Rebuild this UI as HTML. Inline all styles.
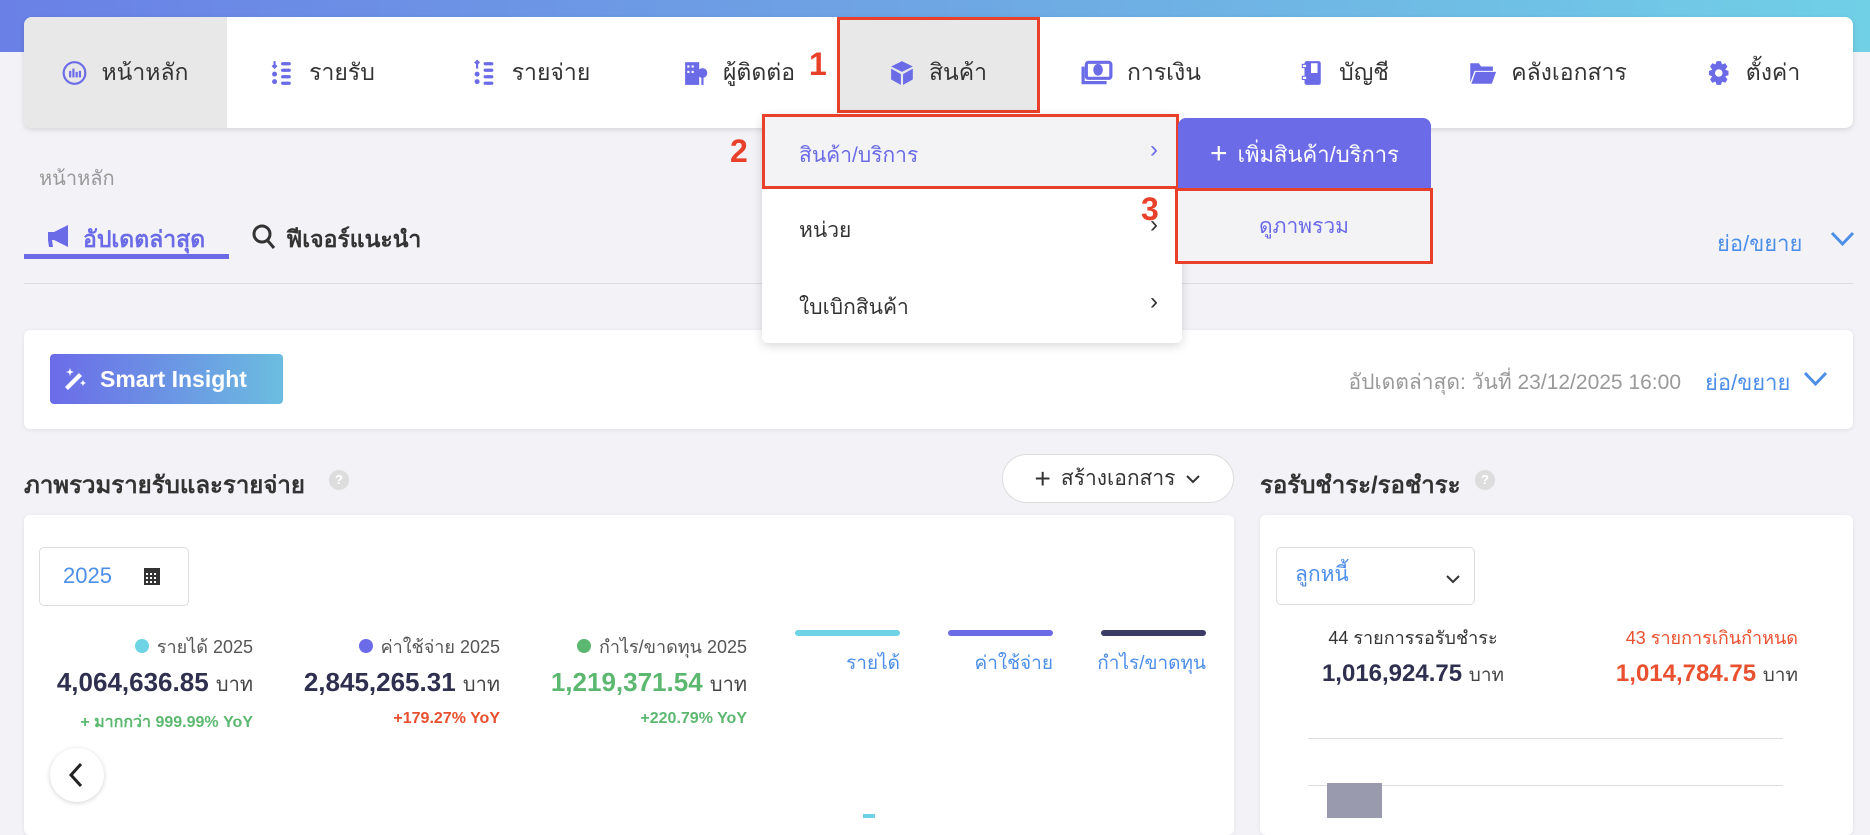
<!DOCTYPE html>
<html><head><meta charset="utf-8">
<style>
*{box-sizing:border-box;margin:0;padding:0}
body{width:1870px;height:818px;overflow:hidden;background:#f3f3f7;font-family:"Liberation Sans","Noto Sans CJK SC",sans-serif;color:#333;position:relative}
.a{position:absolute;white-space:nowrap}
.top{position:absolute;left:0;top:0;width:1870px;height:52px;background:linear-gradient(90deg,#6a80e6,#6ea6e4 50%,#70d0e6)}
.nav{position:absolute;left:24px;top:17px;width:1829px;height:111px;background:#fff;border-radius:8px;box-shadow:0 2px 6px rgba(0,0,0,.12);overflow:hidden}
.ni{position:absolute;top:0;height:111px;display:flex;align-items:center;justify-content:center;font-size:23px;color:#333;gap:14px;transform:translateX(-50%)}
.ni svg{flex-shrink:0;width:26px;height:28px}
.red{border:3px solid #e8402a}
.rn{position:absolute;color:#e8402a;font-weight:bold;font-size:32px}
.card{position:absolute;background:#fff;border-radius:6px;box-shadow:0 1px 4px rgba(0,0,0,.08)}
.blue{color:#4d8fe8}
</style></head><body>
<div class="top"></div>
<div class="nav">
 <div style="position:absolute;left:0;top:0;width:203px;height:111px;background:#e8e8e8"></div>
 <div class="ni" style="left:101px"><svg viewBox="0 0 24 24" fill="none" stroke="#6b6be8" stroke-width="2"><circle cx="12" cy="12" r="10"/><path d="M8 10v6M11 8v8M14 11v5M17 10v6"/></svg>หน้าหลัก</div>
 <div class="ni" style="left:298px"><svg viewBox="0 0 24 24" fill="#6b6be8"><path d="M5 1v6M3 5l2 2 2-2" stroke="#6b6be8" stroke-width="2" fill="none"/><circle cx="5" cy="13" r="2.3"/><circle cx="5" cy="20" r="2.3"/><rect x="11" y="2" width="9" height="3" rx="1.5"/><rect x="11" y="8" width="9" height="3" rx="1.5"/><rect x="11" y="14" width="9" height="3" rx="1.5"/><rect x="11" y="20" width="9" height="3" rx="1.5"/></svg>รายรับ</div>
 <div class="ni" style="left:507px"><svg viewBox="0 0 24 24" fill="#6b6be8"><path d="M5 8V1M3 3l2-2 2 2" stroke="#6b6be8" stroke-width="2" fill="none"/><circle cx="5" cy="13" r="2.3"/><circle cx="5" cy="20" r="2.3"/><rect x="11" y="2" width="9" height="3" rx="1.5"/><rect x="11" y="8" width="9" height="3" rx="1.5"/><rect x="11" y="14" width="9" height="3" rx="1.5"/><rect x="11" y="20" width="9" height="3" rx="1.5"/></svg>รายจ่าย</div>
 <div class="ni" style="left:715px"><svg viewBox="0 0 24 24" fill="#6b6be8"><rect x="2" y="2" width="13" height="21"/><g fill="#fff"><rect x="4" y="5" width="2" height="2"/><rect x="8" y="5" width="2" height="2"/><rect x="4" y="10" width="2" height="2"/><rect x="8" y="10" width="2" height="2"/></g><circle cx="18" cy="12" r="4.5"/><rect x="17" y="16" width="2" height="7"/></svg>ผู้ติดต่อ</div>
 <div style="position:absolute;left:813px;top:0;width:203px;height:96px;background:#e8e8e8" class="red"></div>
 <div class="ni" style="left:914px"><svg viewBox="0 0 24 24" fill="#6b6be8"><path d="M12 1l10 5-10 5L2 6z"/><path d="M2 8l9 5v10l-9-5zM22 8l-9 5v10l9-5z"/></svg>สินค้า</div>
 <div class="ni" style="left:1117px"><svg style="width:32px" viewBox="0 0 30 24" fill="none" stroke="#6b6be8" stroke-width="3"><rect x="5" y="2" width="23" height="15" rx="2"/><path d="M2 6v15h22"/><ellipse cx="16" cy="9" rx="3" ry="4" fill="#6b6be8"/></svg>การเงิน</div>
 <div class="ni" style="left:1320px"><svg viewBox="0 0 24 24" fill="#6b6be8"><rect x="5" y="1" width="15" height="22" rx="2"/><rect x="3" y="4" width="4" height="3" fill="#fff" stroke="#6b6be8"/><rect x="3" y="15" width="4" height="3" fill="#fff" stroke="#6b6be8"/><rect x="11" y="3" width="6" height="9" fill="#fff"/></svg>บัญชี</div>
 <div class="ni" style="left:1524px"><svg style="width:28px" viewBox="0 0 26 24" fill="#6b6be8"><path d="M1 3h8l2 3h11v4H5L1 21z"/><path d="M6 11h19l-4 11H2z"/></svg>คลังเอกสาร</div>
 <div class="ni" style="left:1729px"><svg viewBox="0 0 24 24" fill="#6b6be8"><path d="M10 1h4l1 3 3-1 2 3-2 3 3 1v4l-3 1 2 3-2 3-3-1-1 3h-4l-1-3-3 1-2-3 2-3-3-1v-4l3-1-2-3 2-3 3 1z"/><circle cx="12" cy="12" r="3.5" fill="#fff"/></svg>ตั้งค่า</div>
</div>
<div class="rn" style="left:809px;top:46px">1</div>

<div class="a" style="left:39px;top:162px;font-size:20px;color:#999">หน้าหลัก</div>
<svg class="a" style="left:46px;top:223px" width="28" height="26" viewBox="0 0 28 26" fill="#6b6be8"><path d="M2 9h6l14-7v22L8 17H6l1 7H3l-1-7z"/></svg>
<div class="a" style="left:83px;top:222px;font-size:23px;font-weight:bold;color:#6b6be8">อัปเดตล่าสุด</div>
<div class="a" style="left:24px;top:254px;width:205px;height:5px;background:#6b6be8"></div>
<svg class="a" style="left:252px;top:224px" width="24" height="26" viewBox="0 0 24 26" fill="none" stroke="#333" stroke-width="3"><circle cx="10" cy="10" r="8"/><path d="M16 17l6 7"/></svg>
<div class="a" style="left:286px;top:222px;font-size:23px;font-weight:bold;color:#333">ฟีเจอร์แนะนำ</div>
<div class="a" style="left:24px;top:283px;width:1829px;height:1px;background:#ddd"></div>
<div class="a blue" style="left:1717px;top:226px;font-size:22px">ย่อ/ขยาย</div>
<svg class="a" style="left:1830px;top:231px" width="25" height="16" viewBox="0 0 25 16" fill="none" stroke="#4d8fe8" stroke-width="3"><path d="M2 2l10.5 11L23 2"/></svg>

<div class="card" style="left:24px;top:330px;width:1829px;height:99px"></div>
<div class="a" style="left:50px;top:354px;width:233px;height:50px;border-radius:4px;background:linear-gradient(90deg,#6b6be8,#6bbde0);color:#fff;font-weight:bold;font-size:23px;display:flex;align-items:center;padding-left:50px">Smart Insight</div>
<svg class="a" style="left:62px;top:366px" width="26" height="26" viewBox="0 0 26 26" fill="#fff"><path d="M3 21L17 7l3 3L6 24z"/><path d="M8 2l1 3 3 1-3 1-1 3-1-3-3-1 3-1zM21 14l1 2 2 1-2 1-1 2-1-2-2-1 2-1z"/></svg>
<div class="a" style="left:1310px;top:366px;font-size:21px;color:#999;width:371px;text-align:right">อัปเดตล่าสุด: วันที่ 23/12/2025 16:00</div>
<div class="a blue" style="left:1705px;top:365px;font-size:22px">ย่อ/ขยาย</div>
<svg class="a" style="left:1803px;top:371px" width="25" height="16" viewBox="0 0 25 16" fill="none" stroke="#4d8fe8" stroke-width="3"><path d="M2 2l10.5 11L23 2"/></svg>

<div class="a" style="left:24px;top:465px;font-size:24px;font-weight:bold;color:#333">ภาพรวมรายรับและรายจ่าย</div>
<div class="a" style="left:329px;top:470px;width:20px;height:20px;border-radius:50%;background:#ddd;color:#fff;font-size:13px;text-align:center;line-height:20px;font-weight:bold">?</div>
<div class="a" style="left:1002px;top:454px;width:232px;height:49px;border-radius:25px;background:#fff;border:1px solid #ddd;font-size:21px;color:#333;display:flex;align-items:center;justify-content:center;gap:10px"><span style="font-size:28px;font-weight:300">+</span>สร้างเอกสาร<svg width="16" height="10" viewBox="0 0 16 10" fill="none" stroke="#333" stroke-width="2"><path d="M2 2l6 6 6-6"/></svg></div>
<div class="a" style="left:1260px;top:465px;font-size:24px;font-weight:bold;color:#333">รอรับชำระ/รอชำระ</div>
<div class="a" style="left:1475px;top:470px;width:20px;height:20px;border-radius:50%;background:#ddd;color:#fff;font-size:13px;text-align:center;line-height:20px;font-weight:bold">?</div>

<div class="card" style="left:24px;top:515px;width:1210px;height:320px"></div>
<div class="a" style="left:39px;top:547px;width:150px;height:59px;border:1px solid #ddd;border-radius:5px;background:#fff"></div>
<div class="a blue" style="left:63px;top:563px;font-size:22px">2025</div>
<svg class="a" style="left:144px;top:566px" width="16" height="19" viewBox="0 0 16 19" fill="#333"><rect x="0" y="2" width="16" height="17"/><g fill="#fff"><rect x="2" y="7" width="2" height="2"/><rect x="6" y="7" width="2" height="2"/><rect x="10" y="7" width="2" height="2"/><rect x="2" y="11" width="2" height="2"/><rect x="6" y="11" width="2" height="2"/><rect x="10" y="11" width="2" height="2"/><rect x="2" y="15" width="2" height="2"/><rect x="6" y="15" width="2" height="2"/><rect x="10" y="15" width="2" height="2"/></g></svg>

<div class="a" style="left:40px;top:632px;width:213px;text-align:right;font-size:18px;color:#555"><span style="display:inline-block;width:14px;height:14px;border-radius:50%;background:#6fd3e6;margin-right:8px"></span>รายได้ 2025</div>
<div class="a" style="left:30px;top:667px;width:223px;text-align:right;font-size:26px;font-weight:bold;color:#2f2f4f">4,064,636.85 <span style="font-size:20px;font-weight:normal;color:#444">บาท</span></div>
<div class="a" style="left:30px;top:710px;width:223px;text-align:right;font-size:16px;font-weight:bold;color:#5cb870">+ มากกว่า 999.99% YoY</div>
<div class="a" style="left:260px;top:632px;width:240px;text-align:right;font-size:18px;color:#555"><span style="display:inline-block;width:14px;height:14px;border-radius:50%;background:#6b6be8;margin-right:8px"></span>ค่าใช้จ่าย 2025</div>
<div class="a" style="left:260px;top:667px;width:240px;text-align:right;font-size:26px;font-weight:bold;color:#2f2f4f">2,845,265.31 <span style="font-size:20px;font-weight:normal;color:#444">บาท</span></div>
<div class="a" style="left:260px;top:710px;width:240px;text-align:right;font-size:16px;font-weight:bold;color:#e8502f">+179.27% YoY</div>
<div class="a" style="left:500px;top:632px;width:247px;text-align:right;font-size:18px;color:#555"><span style="display:inline-block;width:14px;height:14px;border-radius:50%;background:#5cb870;margin-right:8px"></span>กำไร/ขาดทุน 2025</div>
<div class="a" style="left:500px;top:667px;width:247px;text-align:right;font-size:26px;font-weight:bold;color:#5cb870">1,219,371.54 <span style="font-size:20px;font-weight:normal;color:#444">บาท</span></div>
<div class="a" style="left:500px;top:710px;width:247px;text-align:right;font-size:16px;font-weight:bold;color:#5cb870">+220.79% YoY</div>

<div class="a" style="left:795px;top:630px;width:105px;height:6px;border-radius:3px;background:#6fd3e6"></div>
<div class="a" style="left:948px;top:630px;width:105px;height:6px;border-radius:3px;background:#6b6be8"></div>
<div class="a" style="left:1101px;top:630px;width:105px;height:6px;border-radius:3px;background:#3b3b66"></div>
<div class="a blue" style="left:795px;top:648px;width:105px;text-align:right;font-size:19px">รายได้</div>
<div class="a blue" style="left:900px;top:648px;width:153px;text-align:right;font-size:19px">ค่าใช้จ่าย</div>
<div class="a blue" style="left:1053px;top:648px;width:153px;text-align:right;font-size:19px">กำไร/ขาดทุน</div>
<div class="a" style="left:863px;top:814px;width:12px;height:4px;background:#6fd3e6"></div>
<div class="a" style="left:50px;top:748px;width:54px;height:54px;border-radius:50%;background:#fff;box-shadow:0 1px 5px rgba(0,0,0,.18)"></div>
<svg class="a" style="left:68px;top:762px" width="16" height="26" viewBox="0 0 16 26" fill="none" stroke="#222" stroke-width="3"><path d="M13 2L3 13l10 11"/></svg>

<div class="card" style="left:1260px;top:515px;width:593px;height:320px"></div>
<div class="a" style="left:1276px;top:547px;width:199px;height:58px;border:1px solid #ddd;border-radius:5px;background:#fff"></div>
<div class="a blue" style="left:1295px;top:558px;font-size:21px">ลูกหนี้</div>
<svg class="a" style="left:1446px;top:575px" width="14" height="9" viewBox="0 0 14 9" fill="none" stroke="#333" stroke-width="2"><path d="M1 1l6 6 6-6"/></svg>
<div class="a" style="left:1300px;top:623px;width:226px;text-align:center;font-size:18px;color:#333">44 รายการรอรับชำระ</div>
<div class="a" style="left:1300px;top:660px;width:226px;text-align:center;font-size:24px;font-weight:bold;color:#2f2f4f">1,016,924.75 <span style="font-size:19px;font-weight:normal;color:#444">บาท</span></div>
<div class="a" style="left:1560px;top:623px;width:238px;text-align:right;font-size:18px;color:#e8502f">43 รายการเกินกำหนด</div>
<div class="a" style="left:1560px;top:660px;width:238px;text-align:right;font-size:24px;font-weight:bold;color:#e8502f">1,014,784.75 <span style="font-size:19px;font-weight:normal;color:#444">บาท</span></div>
<div class="a" style="left:1308px;top:738px;width:475px;height:1px;background:#ddd"></div>
<div class="a" style="left:1308px;top:785px;width:475px;height:1px;background:#ddd"></div>
<div class="a" style="left:1327px;top:783px;width:55px;height:35px;background:#9a9aae"></div>

<div class="a" style="left:762px;top:114px;width:420px;height:229px;background:#fff;border-radius:6px;box-shadow:0 3px 10px rgba(0,0,0,.15)"></div>
<div class="a red" style="left:762px;top:114px;width:417px;height:75px;background:#f3f3f6"></div>
<div class="a" style="left:799px;top:139px;font-size:21px;color:#6b6be8">สินค้า/บริการ</div>
<div class="a" style="left:1150px;top:136px;font-size:24px;color:#6b6be8">›</div>
<div class="a" style="left:799px;top:214px;font-size:21px;color:#333">หน่วย</div>
<div class="a" style="left:1150px;top:211px;font-size:24px;color:#333">›</div>
<div class="a" style="left:799px;top:291px;font-size:21px;color:#333">ใบเบิกสินค้า</div>
<div class="a" style="left:1150px;top:288px;font-size:24px;color:#333">›</div>
<div class="rn" style="left:730px;top:133px">2</div>
<div class="a" style="left:1178px;top:118px;width:253px;height:72px;background:#6b6be8;border-radius:8px 8px 0 0;color:#fff;font-size:22px;display:flex;align-items:center;justify-content:center;gap:10px"><span style="font-size:30px;font-weight:300">+</span>เพิ่มสินค้า/บริการ</div>
<div class="a red" style="left:1175px;top:188px;width:258px;height:76px;background:#f3f3f6;display:flex;align-items:center;justify-content:center;font-size:21px;color:#6b6be8">ดูภาพรวม</div>
<div class="rn" style="left:1141px;top:191px">3</div>
</body></html>
